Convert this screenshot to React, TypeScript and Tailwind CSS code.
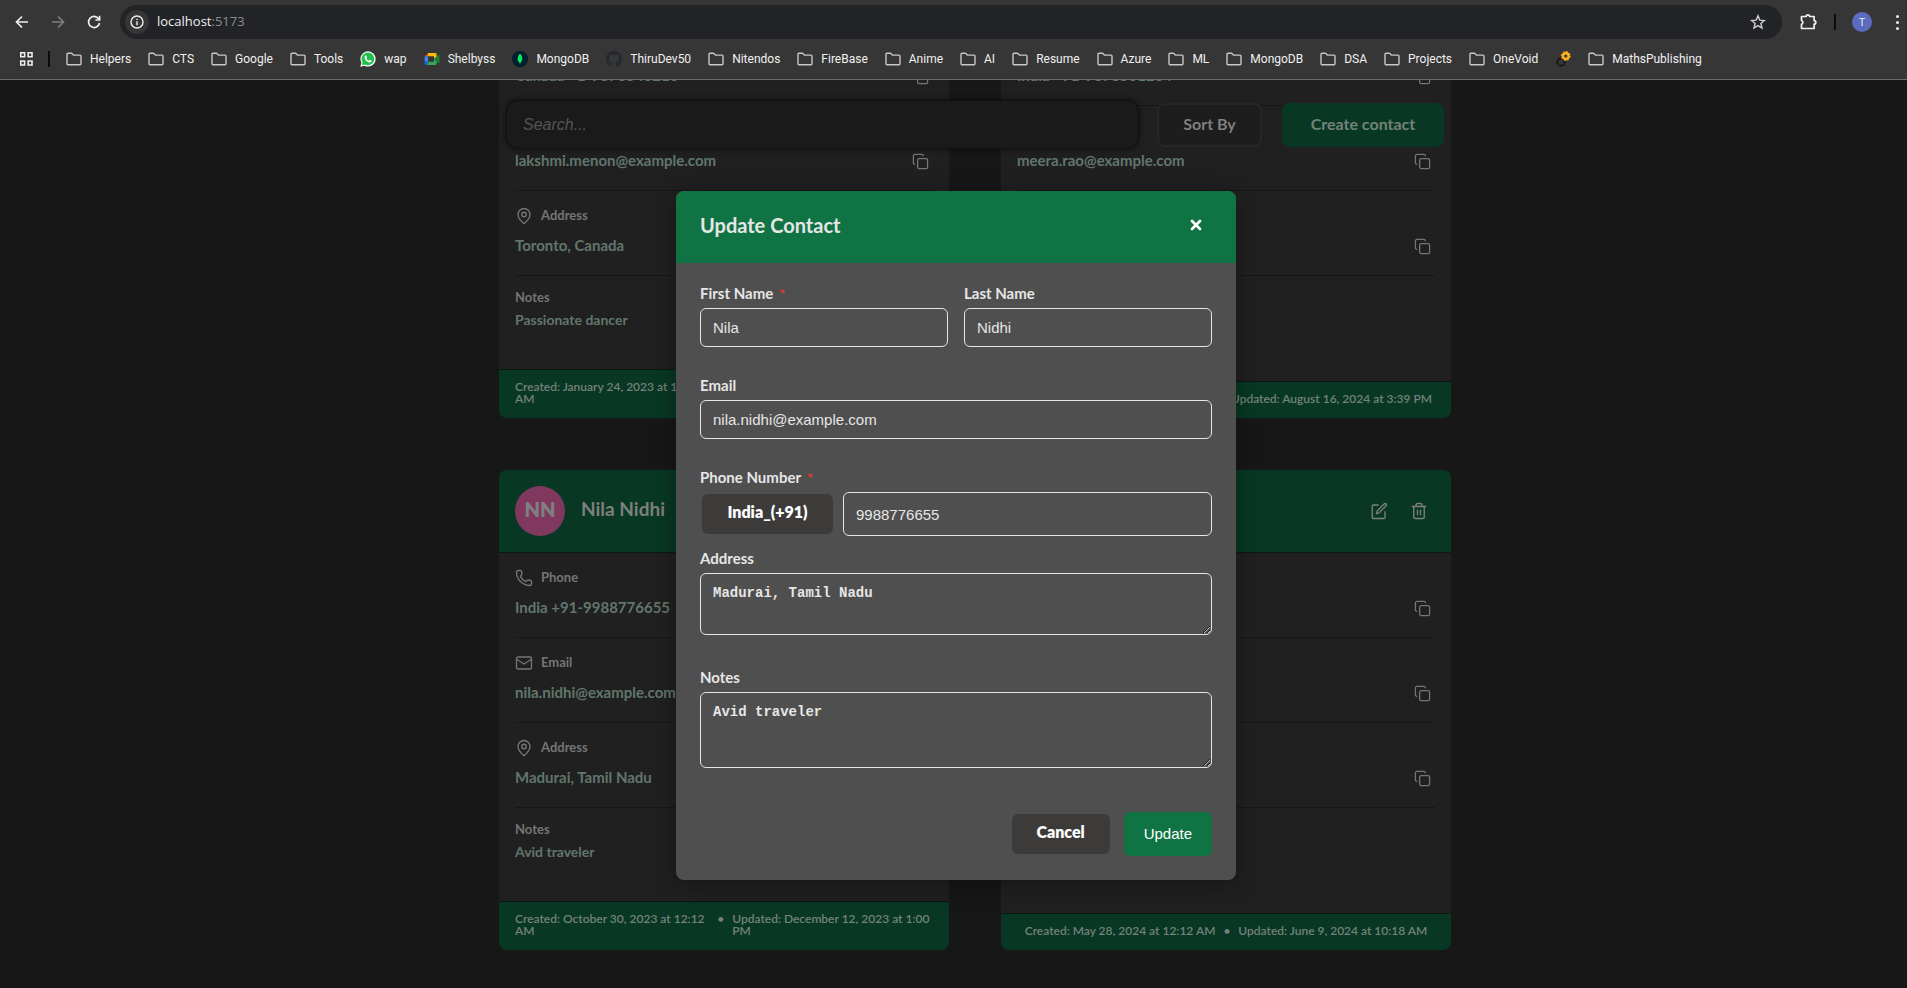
import React from "react";
import { Copy, MapPin, Phone, Mail, X } from "lucide-react";

type IconProps = { className?: string };

const FolderIcon = () => (
  <svg width="16" height="16" viewBox="0 0 16 16" fill="none" stroke="#c7c7c7" strokeWidth="1.4" strokeLinejoin="round" className="shrink-0">
    <path d="M1 3.2c0-.6.4-1 1-1h3.6l1.8 1.9H14c.6 0 1 .4 1 1v7.7c0 .6-.4 1-1 1H2c-.6 0-1-.4-1-1z" />
  </svg>
);

const WhatsappIcon = () => (
  <svg width="16" height="16" viewBox="0 0 24 24" className="shrink-0">
    <path d="M.5 23.5 2.1 17.6A11.4 11.4 0 1 1 6.6 22z" fill="#fff" />
    <path d="M2.8 21.2 3.9 17A9.5 9.5 0 1 1 7.2 20.1z" fill="#1fc04b" />
    <path d="M8.6 6.6c-.6 0-1.800.9-1.800 2.700 0 3.500 4.300 7.900 8 7.900 1.700 0 2.700-1 2.700-2.100 0-.4-.1-.6-2.700-1.800-.5-.2-.9 1.200-1.500 1.200-.8 0-3.700-2.300-3.700-3.300 0-.4 1-.9.8-1.500-.9-2.700-1-3.100-1.800-3.100z" fill="#fff" />
  </svg>
);

const MeetIcon = () => (
  <svg width="16" height="16" viewBox="0 0 24 24" className="shrink-0">
    <path d="M6 3v5H1z" fill="#ea4335" />
    <path d="M6 3h11a2 2 0 0 1 2 2v4l-4 3V8H6z" fill="#fbbc04" />
    <path d="M1 8h5v8H1z" fill="#4285f4" />
    <path d="M1 16h5v5H3a2 2 0 0 1-2-2z" fill="#1967d2" />
    <path d="M6 16h9v-4l4-1v8a2 2 0 0 1-2 2H6z" fill="#34a853" />
    <path d="M15 12l7-6.500c.5-.4 1.200 0 1.200.6v11.800c0 .6-.7 1-1.200.6z" fill="#188038" />
  </svg>
);

const MongoIcon = () => (
  <svg width="16" height="16" viewBox="0 0 16 16" className="shrink-0">
    <circle cx="8" cy="8" r="8" fill="#001e2b" />
    <path d="M8 2.500c2.600 3 3.400 6.500.4 9.300L8.200 13.500h-.4l-.2-1.700C4.600 9 5.400 5.500 8 2.500z" fill="#00ed64" />
  </svg>
);

const GithubIcon = () => (
  <svg width="16" height="16" viewBox="0 0 16 16" className="shrink-0">
    <path
      fill="#24292f"
      d="M8 0C3.580 0 0 3.580 0 8c0 3.540 2.290 6.530 5.470 7.590.4.070.55-.17.55-.38 0-.19-.01-.82-.01-1.490-2.010.37-2.530-.49-2.690-.94-.09-.23-.48-.94-.82-1.130-.28-.15-.68-.52-.01-.53.63-.01 1.080.58 1.230.82.72 1.210 1.870.87 2.330.66.07-.52.28-.87.51-1.070-1.780-.2-3.640-.89-3.640-3.950 0-.87.31-1.590.82-2.150-.08-.2-.36-1.020.08-2.120 0 0 .67-.21 2.200.82.64-.18 1.320-.27 2-.27s1.360.09 2 .27c1.530-1.040 2.200-.82 2.200-.82.44 1.100.16 1.920.08 2.120.51.56.82 1.270.82 2.150 0 3.070-1.870 3.750-3.650 3.950.29.25.54.73.54 1.480 0 1.070-.01 1.930-.01 2.200 0 .21.15.46.55.38A8.010 8.010 0 0 0 16 8c0-4.420-3.580-8-8-8z"
    />
  </svg>
);

const GearsIcon = () => (
  <svg width="16" height="16" viewBox="0 0 16 16" className="shrink-0" fill="none">
    <circle cx="6" cy="11" r="3.400" stroke="#151515" strokeWidth="1.100" />
    <circle cx="6" cy="11" r="4.400" stroke="#151515" strokeWidth="1" strokeDasharray="1.500 1.300" />
    <circle cx="10.800" cy="5" r="2.900" stroke="#fbb01c" strokeWidth="2.600" />
    <circle cx="10.800" cy="5" r="4.500" stroke="#fbb01c" strokeWidth="1" strokeDasharray="1.800 1.700" />
  </svg>
);

const EditIcon = ({ className }: IconProps) => (
  <svg width="18" height="18" viewBox="0 0 24 24" fill="none" stroke="currentColor" strokeWidth="1.800" strokeLinecap="round" strokeLinejoin="round" className={className}>
    <path d="M11 4H4.500A1.500 1.500 0 0 0 3 5.500v15A1.500 1.500 0 0 0 4.500 22h14a1.500 1.500 0 0 0 1.500-1.500V13" />
    <path d="M18.800 2.700a1.700 1.700 0 0 1 2.500 2.500L12 14.500l-3.500 1 1-3.500z" />
  </svg>
);

const TrashIcon = ({ className }: IconProps) => (
  <svg width="18" height="18" viewBox="0 0 24 24" fill="none" stroke="currentColor" strokeWidth="1.800" strokeLinecap="round" strokeLinejoin="round" className={className}>
    <path d="M3 6h18M5 6v14a2 2 0 0 0 2 2h10a2 2 0 0 0 2-2V6M8 6V4a2 2 0 0 1 2-2h4a2 2 0 0 1 2 2v2M10 11v6M14 11v6" />
  </svg>
);

type Bookmark = { label: string; icon?: React.ReactNode };

const bookmarks: Bookmark[] = [
  { label: "Helpers" },
  { label: "CTS" },
  { label: "Google" },
  { label: "Tools" },
  { label: "wap", icon: <WhatsappIcon /> },
  { label: "Shelbyss", icon: <MeetIcon /> },
  { label: "MongoDB", icon: <MongoIcon /> },
  { label: "ThiruDev50", icon: <GithubIcon /> },
  { label: "Nitendos" },
  { label: "FireBase" },
  { label: "Anime" },
  { label: "AI" },
  { label: "Resume" },
  { label: "Azure" },
  { label: "ML" },
  { label: "MongoDB" },
  { label: "DSA" },
  { label: "Projects" },
  { label: "OneVoid" },
  { label: "", icon: <GearsIcon /> },
  { label: "MathsPublishing" },
];

function BrowserBar() {
  return (
    <header className="relative z-30 h-20 shrink-0 border-b border-[#6b6b6b] bg-[#363636] font-['Open_Sans','Noto_Sans',sans-serif] text-xs text-[#f1f1f1]">
      <div className="flex h-11 items-center pl-3">
        <button aria-label="Back" className="flex w-5 justify-center">
          <svg width="14" height="14" viewBox="0 0 14 14" fill="none" stroke="#eee" strokeWidth="1.700">
            <path d="M13 7H2M7 1.500 1.500 7 7 12.500" />
          </svg>
        </button>
        <button aria-label="Forward" className="ml-4 flex w-5 justify-center">
          <svg width="14" height="14" viewBox="0 0 14 14" fill="none" stroke="#7e7e7e" strokeWidth="1.700">
            <path d="M1 7h11M7 1.500 12.500 7 7 12.500" />
          </svg>
        </button>
        <button aria-label="Reload" className="ml-4 flex w-5 justify-center">
          <svg width="14" height="14" viewBox="0 0 14 14" fill="none" stroke="#eee" strokeWidth="1.700">
            <path d="M12 4.500A5.500 5.500 0 1 0 12.500 8" />
            <path d="M12.600.8v4.200H8.400" />
          </svg>
        </button>
        <div className="ml-4 flex h-[34px] flex-1 items-center rounded-full bg-[#212327] pl-[5px] pr-4">
          <span className="flex size-6 items-center justify-center rounded-full bg-[#363636]">
            <svg width="14" height="14" viewBox="0 0 14 14" fill="none" stroke="#eee" strokeWidth="1.400">
              <circle cx="7" cy="7" r="6" />
              <path d="M7 6.200v4M7 3.700v1.400" />
            </svg>
          </span>
          <span className="ml-2 flex-1 text-[13px]">
            localhost<span className="text-[#8b8c8f]">:5173</span>
          </span>
          <button aria-label="Bookmark this page">
            <svg width="16" height="16" viewBox="0 0 16 16" fill="none" stroke="#cfcfcf" strokeWidth="1.400">
              <path d="m8 1.800 1.800 4.300 4.600.4-3.500 3 1.100 4.500L8 11.600 4 14l1.100-4.500-3.500-3 4.600-.4z" />
            </svg>
          </button>
        </div>
        <button aria-label="Extensions" className="ml-[18px]">
          <svg width="18" height="18" viewBox="0 0 18 18" fill="none" stroke="#f1f1f1" strokeWidth="1.700" strokeLinejoin="round">
            <path d="M1.500 3.500h4.700a1.700 1.700 0 0 1 3.400 0h4.500v4.200a1.700 1.700 0 0 1 0 3.400v4.400H1.500v-4.200a2 2 0 0 0 0-3.800z" />
          </svg>
        </button>
        <span className="ml-4 h-4 w-0.5 bg-[#0c0c0c]" />
        <span className="ml-4 flex size-5 items-center justify-center rounded-full bg-[#5c6bc0] text-[11px]">T</span>
        <button aria-label="Menu" className="ml-[18px] flex w-[14px] flex-col items-center gap-[3px]">
          <span className="size-[3px] rounded-full bg-[#eee]" />
          <span className="size-[3px] rounded-full bg-[#eee]" />
          <span className="size-[3px] rounded-full bg-[#eee]" />
        </button>
        <span className="w-[3px]" />
      </div>
      <nav className="flex h-[30px] items-center whitespace-nowrap pl-5 font-[Roboto,sans-serif]">
        <svg width="13" height="14" viewBox="0 0 13 14" fill="none" stroke="#eee" strokeWidth="1.600">
          <path d="M.8.8h3.800v4H.8zM8.200.8H12v4H8.200zM.8 9h3.800v4H.8zM8.200 9H12v4H8.200z" />
        </svg>
        <span className="ml-[15px] mr-4 h-4 w-0.5 bg-[#0c0c0c]" />
        <div className="flex items-center gap-[17px]">
          {bookmarks.map((b, i) => (
            <a key={i} href="#" className="flex items-center gap-2" aria-label={b.label || "Settings"}>
              {b.icon ?? <FolderIcon />}
              {b.label && <span>{b.label}</span>}
            </a>
          ))}
        </div>
      </nav>
    </header>
  );
}

type Contact = {
  name: string;
  initials: string;
  tint: string;
  phone: string;
  email: string;
  address: string;
  notes: string;
  created: string;
  updated: string;
};

const contacts: Contact[] = [
  {
    name: "Lakshmi Menon",
    initials: "LM",
    tint: "bg-[#3a5c80]",
    phone: "Canada +1-9876543210",
    email: "lakshmi.menon@example.com",
    address: "Toronto, Canada",
    notes: "Passionate dancer",
    created: "January 24, 2023 at 12:12 AM",
    updated: "December 14, 2023 at 4:20 PM",
  },
  {
    name: "Meera Rao",
    initials: "MR",
    tint: "bg-[#80603a]",
    phone: "India +91-9876501234",
    email: "meera.rao@example.com",
    address: "Bangalore",
    notes: "Art lover",
    created: "July 14, 2023 at 12:12 AM",
    updated: "August 16, 2024 at 3:39 PM",
  },
  {
    name: "Nila Nidhi",
    initials: "NN",
    tint: "bg-[#80385f]",
    phone: "India +91-9988776655",
    email: "nila.nidhi@example.com",
    address: "Madurai, Tamil Nadu",
    notes: "Avid traveler",
    created: "October 30, 2023 at 12:12 AM",
    updated: "December 12, 2023 at 1:00 PM",
  },
  {
    name: "Priya Das",
    initials: "PD",
    tint: "bg-[#3a8060]",
    phone: "India +91-9123456780",
    email: "priya.das@example.com",
    address: "Kolkata",
    notes: "Book reader",
    created: "May 28, 2024 at 12:12 AM",
    updated: "June 9, 2024 at 10:18 AM",
  },
];

function DetailRow({ icon, label, value }: { icon: React.ReactNode; label: string; value: string }) {
  return (
    <div className="flex h-[85px] flex-col border-b border-[#111916] pt-4">
      <div className="flex h-[18px] items-center gap-2 text-[13px] leading-4 text-[#757575]">
        {icon}
        <span className="pb-0.5">{label}</span>
      </div>
      <div className="mt-2 flex h-[26px] items-center justify-between pr-1 text-[15px] leading-5 text-[#61766c]">
        <span className="pb-0.5">{value}</span>
        <button aria-label={"Copy " + label.toLowerCase()} className="text-[#757575]">
          <Copy size={17} strokeWidth={1.8} />
        </button>
      </div>
    </div>
  );
}

function ContactCard({ c }: { c: Contact }) {
  return (
    <article className="flex h-[480px] flex-col overflow-hidden rounded-lg bg-[#202020]">
      <div className="flex h-[83px] items-center border-b border-[#0b1913] bg-[#083823] px-4 text-[#7f7f7f]">
        <span className={"flex size-[50px] items-center justify-center rounded-full pb-1 text-xl font-extrabold " + c.tint}>{c.initials}</span>
        <h2 className="ml-4 flex-1 pb-1 text-[19px] leading-6">{c.name}</h2>
        <button aria-label="Edit contact">
          <EditIcon />
        </button>
        <button aria-label="Delete contact" className="ml-[22px] mr-[7px]">
          <TrashIcon />
        </button>
      </div>
      <div className="flex-1 px-4">
        <DetailRow icon={<Phone size={18} strokeWidth={1.8} />} label="Phone" value={c.phone} />
        <DetailRow icon={<Mail size={18} strokeWidth={1.8} />} label="Email" value={c.email} />
        <DetailRow icon={<MapPin size={18} strokeWidth={1.8} />} label="Address" value={c.address} />
        <p className="mt-[11px] text-[13px] leading-5 text-[#757575]">Notes</p>
        <p className="mt-[3px] text-sm leading-5 text-[#61766c]">{c.notes}</p>
      </div>
      <div className="flex items-start justify-center gap-2 border-t border-[#0b1913] bg-[#083823] px-4 pb-[13px] pt-[11px] text-xs font-semibold leading-3 text-[#75817b]">
        <span>Created: {c.created}</span>
        <span>•</span>
        <span>Updated: {c.updated}</span>
      </div>
    </article>
  );
}

const field =
  "block w-full rounded-md border border-[#e4e4e4] bg-transparent px-3 text-[#e6e6e6] outline-none";

function Label({ htmlFor, required, children }: { htmlFor: string; required?: boolean; children: React.ReactNode }) {
  return (
    <label htmlFor={htmlFor} className="mb-[5px] block text-[15px] leading-5">
      {children}
      {required && <span className="ml-1.5 text-sm leading-4 text-[#e53935]">*</span>}
    </label>
  );
}

function UpdateDialog() {
  return (
    <div className="absolute inset-0 z-20 flex items-center justify-center pl-[5px] pt-[3px]">
      <section role="dialog" aria-label="Update Contact" className="w-[560px] overflow-hidden rounded-lg bg-[#4f4f4f] text-[#e6e6e6] shadow-[0_4px_24px_rgba(0,0,0,0.35)]">
        <div className="flex h-[72px] items-center justify-between bg-[#0f7344] pb-1 pl-6 pr-8">
          <h1 className="text-xl leading-6">Update Contact</h1>
          <button aria-label="Close" className="text-white">
            <X size={16} strokeWidth={4} />
          </button>
        </div>
        <form className="px-6 pb-6 pt-5">
          <div className="grid grid-cols-2 gap-4">
            <div>
              <Label htmlFor="first" required>First Name</Label>
              <input id="first" defaultValue="Nila" className={field + " h-[39px] font-['Liberation_Sans',sans-serif] text-[15px] font-normal"} />
            </div>
            <div>
              <Label htmlFor="last">Last Name</Label>
              <input id="last" defaultValue="Nidhi" className={field + " h-[39px] font-['Liberation_Sans',sans-serif] text-[15px] font-normal"} />
            </div>
          </div>
          <div className="mt-7">
            <Label htmlFor="email">Email</Label>
            <input id="email" defaultValue="nila.nidhi@example.com" className={field + " h-[39px] font-['Liberation_Sans',sans-serif] text-[15px] font-normal"} />
          </div>
          <div className="mt-7">
            <Label htmlFor="phone" required>Phone Number</Label>
            <div className="flex items-center gap-[10px] pl-0.5">
              <button type="button" className="h-10 w-[131px] shrink-0 rounded-md bg-[#3d3b3a] pb-1 text-base font-extrabold text-white">
                India_(+91)
              </button>
              <input id="phone" defaultValue="9988776655" className={field + " h-11 font-['Liberation_Sans',sans-serif] text-[15px] font-normal"} />
            </div>
          </div>
          <div className="mt-3">
            <Label htmlFor="address">Address</Label>
            <textarea id="address" defaultValue="Madurai, Tamil Nadu" className={field + " h-[62px] resize-y py-[9px] font-['Liberation_Mono',monospace] text-sm leading-5"} />
          </div>
          <div className="mt-8">
            <Label htmlFor="notes">Notes</Label>
            <textarea id="notes" defaultValue="Avid traveler" className={field + " h-[76px] resize-y py-[9px] font-['Liberation_Mono',monospace] text-sm leading-5"} />
          </div>
          <div className="mt-11 flex items-center justify-end gap-[14px]">
            <button type="button" className="h-10 w-[98px] rounded-md bg-[#3d3b3a] pb-1 text-base font-extrabold text-white">
              Cancel
            </button>
            <button type="button" className="h-11 rounded-md bg-[#0f7344] px-5 font-['Liberation_Sans',sans-serif] text-[15px] font-normal text-white">
              Update
            </button>
          </div>
        </form>
      </section>
    </div>
  );
}

export default function App() {
  return (
    <div className="flex h-screen flex-col overflow-hidden bg-[#171717]">
      <BrowserBar />
      <main className="relative flex min-h-0 flex-1 flex-col items-center justify-end overflow-hidden pb-[38px] pl-[43px] font-[Lato,sans-serif] font-bold">
        <div className="grid w-[952px] shrink-0 grid-cols-2 gap-[52px]">
          {contacts.map((c) => (
            <ContactCard key={c.name} c={c} />
          ))}
        </div>
        <div className="absolute inset-x-0 top-5 z-10 flex justify-center pl-[43px]">
          <div className="flex w-[938px] items-center">
            <input
              aria-label="Search"
              placeholder="Search..."
              className="h-[49px] min-w-0 flex-1 rounded-xl border border-[#101010] bg-[#1a1a1a] px-4 font-['Liberation_Sans',sans-serif] text-base font-normal italic shadow-[0_0_6px_rgba(0,0,0,0.6)] outline-none placeholder:text-[#545454]"
            />
            <button className="ml-[18px] h-11 w-[105px] rounded-lg border-2 border-[#262626] bg-[#1d1d1d] pb-0.5 text-base text-[#7f7f7f]">Sort By</button>
            <button className="ml-5 h-11 w-[162px] rounded-lg bg-[#083823] pb-0.5 text-base text-[#738379]">Create contact</button>
          </div>
        </div>
        <UpdateDialog />
      </main>
    </div>
  );
}
